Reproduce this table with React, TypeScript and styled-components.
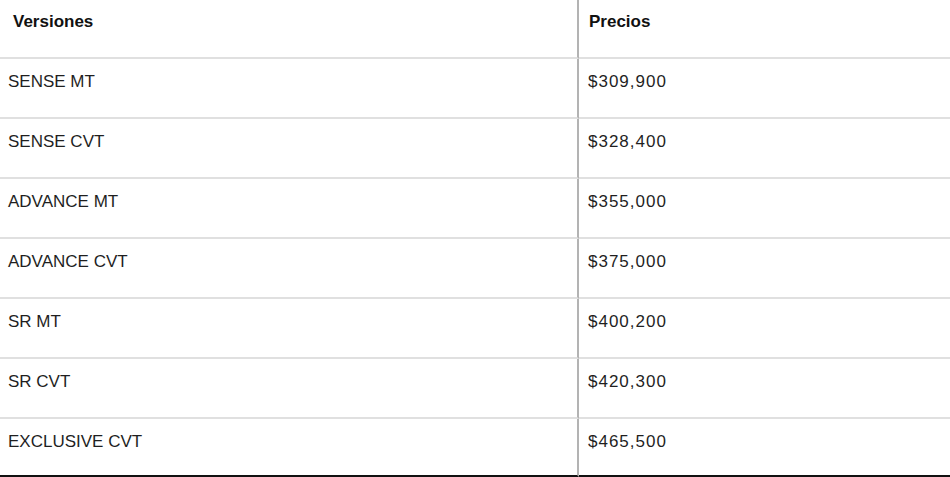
import React from "react";
import styled, { createGlobalStyle } from "styled-components";

const Global = createGlobalStyle`
  html, body { margin: 0; padding: 0; background: #fff; }
  body { font-family: "Liberation Sans", Arial, sans-serif; color: #1a1a1a; }
`;

const Table = styled.table`
  width: 950px;
  border-collapse: separate;
  border-spacing: 0;
  table-layout: fixed;
`;

const HeadCell = styled.th<{ $first?: boolean }>`
  height: 59px;
  box-sizing: border-box;
  padding: 12px 0 0 ${(p) => (p.$first ? "13px" : "10px")};
  vertical-align: top;
  text-align: left;
  font-size: 17px;
  line-height: 20px;
  font-weight: 700;
  color: #111;
  border-bottom: 2px solid #e0e0e0;
  border-right: ${(p) => (p.$first ? "2px solid #b3b3b3" : "none")};
`;

const Cell = styled.td<{ $first?: boolean; $price?: boolean; $last?: boolean }>`
  height: ${(p) => (p.$last ? "58px" : "60px")};
  box-sizing: border-box;
  padding: 13px 0 0 ${(p) => (p.$first ? "8px" : "9px")};
  vertical-align: top;
  font-size: 17px;
  line-height: 20px;
  letter-spacing: ${(p) => (p.$price ? "1px" : "0")};
  color: #1f1f1f;
  border-bottom: 2px solid ${(p) => (p.$last ? "#111" : "#e0e0e0")};
  border-right: ${(p) => (p.$first ? "2px solid #b3b3b3" : "none")};
`;

const data: [string, string][] = [
  ["SENSE MT", "$309,900"],
  ["SENSE CVT", "$328,400"],
  ["ADVANCE MT", "$355,000"],
  ["ADVANCE CVT", "$375,000"],
  ["SR MT", "$400,200"],
  ["SR CVT", "$420,300"],
  ["EXCLUSIVE CVT", "$465,500"],
];

export default function App() {
  return (
    <>
      <Global />
      <Table>
        <colgroup>
          <col style={{ width: 579 }} />
          <col />
        </colgroup>
        <thead>
          <tr>
            <HeadCell $first>Versiones</HeadCell>
            <HeadCell>Precios</HeadCell>
          </tr>
        </thead>
        <tbody>
          {data.map(([v, p], i) => {
            const last = i === data.length - 1;
            return (
              <tr key={v}>
                <Cell $first $last={last}>{v}</Cell>
                <Cell $price $last={last}>{p}</Cell>
              </tr>
            );
          })}
        </tbody>
      </Table>
    </>
  );
}
